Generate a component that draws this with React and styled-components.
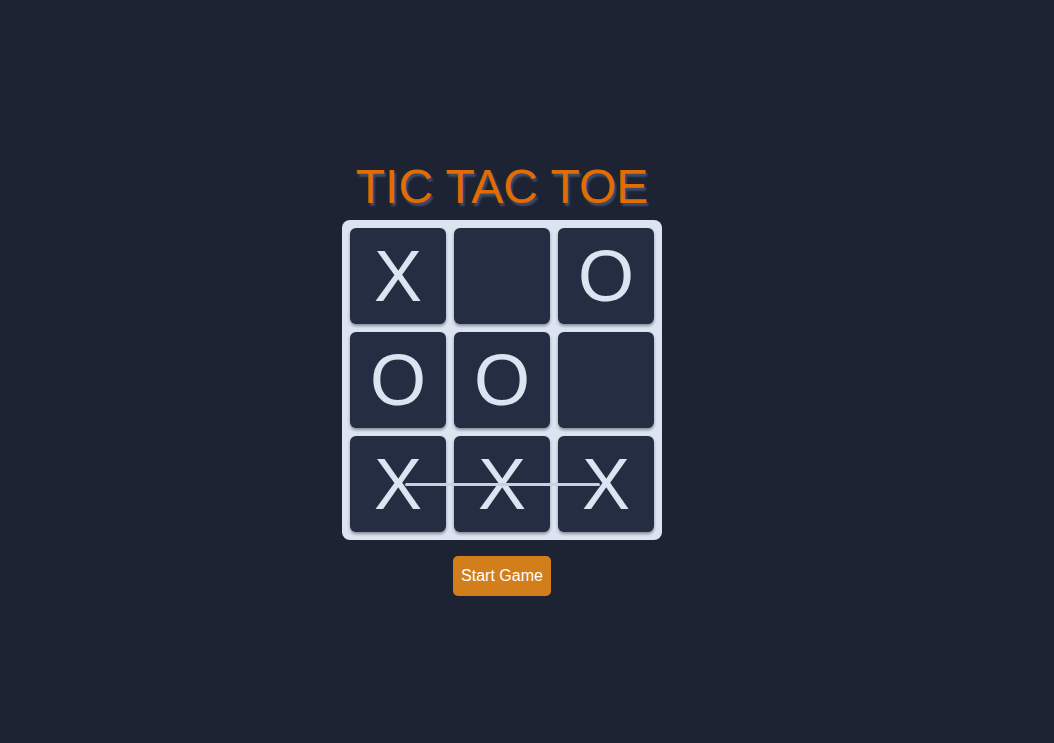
import React, { useState } from "react";
import styled, { createGlobalStyle } from "styled-components";

const GlobalStyle = createGlobalStyle`
	html, body {
		margin: 0;
		padding: 0;
		background: #1d2333;
		font-family: "Liberation Sans", Arial, sans-serif;
	}
`;

const initial = ["X", "", "O", "O", "O", "", "X", "X", "X"];

const App = () => {
	const [cells] = useState(initial);

	return (
		<Page>
			<GlobalStyle />
			<Title>TIC TAC TOE</Title>
			<Board>
				{cells.map((value, i) => (
					<Cell key={i}>{value}</Cell>
				))}
				<StrikeLine />
			</Board>
			<StartButton>Start Game</StartButton>
		</Page>
	);
};

const Page = styled.div`
	min-height: 100vh;
	display: flex;
	flex-direction: column;
	align-items: center;
	justify-content: center;
	padding: 12px 50px 0 0;
	box-sizing: border-box;
`;

const Title = styled.h1`
	margin: 0 0 6px 0;
	font-size: 48px;
	font-weight: 400;
	color: #e26c00;
	text-shadow: 2px 3px 2px #3c4d6c;
	line-height: normal;
`;

const Board = styled.div`
	position: relative;
	display: grid;
	grid-template-columns: repeat(3, 96px);
	grid-template-rows: repeat(3, 96px);
	gap: 8px;
	padding: 8px;
	background: #dde4f1;
	border-radius: 8px;
`;

const Cell = styled.div`
	display: flex;
	align-items: center;
	justify-content: center;
	background: #252d42;
	border-radius: 6px;
	box-shadow: 0 2px 3px rgba(30, 35, 51, 0.45);
	color: #dde4f1;
	font-size: 72px;
	line-height: 1;
	cursor: pointer;
`;

const StrikeLine = styled.div`
	position: absolute;
	left: 63px;
	right: 62px;
	top: 263px;
	height: 3px;
	background: #c9d0de;
	border-radius: 2px;
`;

const StartButton = styled.button`
	margin-top: 16px;
	height: 40px;
	padding: 0 8px;
	border: none;
	border-radius: 5px;
	background: #d27e1b;
	color: #ffffff;
	font-family: "Liberation Sans", Arial, sans-serif;
	font-size: 16px;
	cursor: pointer;
`;

export default App;
